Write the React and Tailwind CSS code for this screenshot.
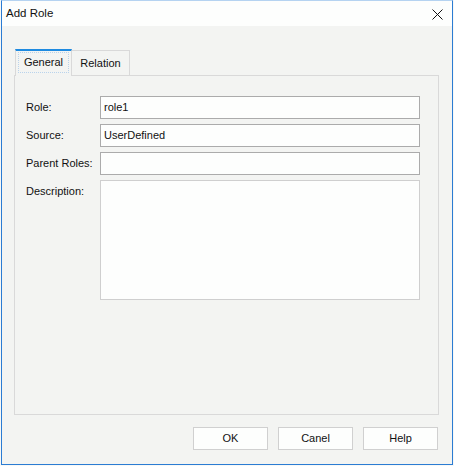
export default function App() {
    const fields = [
        { label: 'Role:', value: 'role1' },
        { label: 'Source:', value: 'UserDefined' },
        { label: 'Parent Roles:', value: '' },
    ];

    return (
        <div
            className="w-[454px] h-[466px] bg-[#f7f8f7] text-[11px] text-[#111]"
            style={{ fontFamily: '"Liberation Sans", Arial, sans-serif' }}
        >
            <div className="ml-px w-[452px] h-[465px] flex flex-col bg-[#f3f4f2] border-x border-b border-[#2b7cd3] border-t border-t-[#b5d3f1]">
                {/* title bar */}
                <div className="h-[25px] shrink-0 bg-[#fdfefd] flex items-center justify-between pl-[4px] pr-[9px]">
                    <span className="text-[11.5px] leading-none mt-[1px]">Add Role</span>
                    <svg width="11" height="11" viewBox="0 0 11 11" className="mt-[1px]">
                        <path d="M0.5 0.5 L10.5 10.5 M10.5 0.5 L0.5 10.5" stroke="#111" strokeWidth="1" fill="none" />
                    </svg>
                </div>

                <div className="flex-1 flex flex-col pl-[12px] pr-[13px] pt-[23px]">
                    {/* tabs */}
                    <div className="flex items-end pl-px">
                        <div className="relative z-10 -mb-px w-[57px] h-[27px] bg-[#f3f4f2] border-t-2 border-t-[#1e8ae0] border-x border-x-[#d9d9d9] flex items-start justify-center pt-[1px]">
                            <div className="w-[51px] h-[21px] border border-dotted border-[#b9d3ec] flex items-center justify-center">
                                General
                            </div>
                        </div>
                        <div className="w-[58px] h-[25px] border-t border-r border-[#d9d9d9] flex items-center justify-center pt-[1px]">
                            Relation
                        </div>
                    </div>

                    {/* panel */}
                    <div className="h-[340px] border border-[#d9d9d9] pt-[20px] pl-[11px] flex flex-col gap-[5px]">
                        {fields.map((f) => (
                            <div key={f.label} className="flex">
                                <div className="w-[74px] h-[23px] flex items-center">{f.label}</div>
                                <div className="w-[320px] h-[23px] border border-[#ababab] bg-[#fdfefd] flex items-center pl-[3px]">
                                    {f.value}
                                </div>
                            </div>
                        ))}
                        <div className="flex">
                            <div className="w-[74px] h-[23px] flex items-center">Description:</div>
                            <div className="w-[320px] h-[120px] border border-[#cfcfcf] bg-[#fdfefd]" />
                        </div>
                    </div>

                    {/* buttons */}
                    <div className="mt-[12px] flex justify-end gap-[10px] pr-px">
                        {['OK', 'Canel', 'Help'].map((b) => (
                            <button
                                key={b}
                                className="w-[75px] h-[23px] border border-[#d0d0d0] bg-[#fdfefd] flex items-center justify-center"
                            >
                                {b}
                            </button>
                        ))}
                    </div>
                </div>
            </div>
        </div>
    );
}
